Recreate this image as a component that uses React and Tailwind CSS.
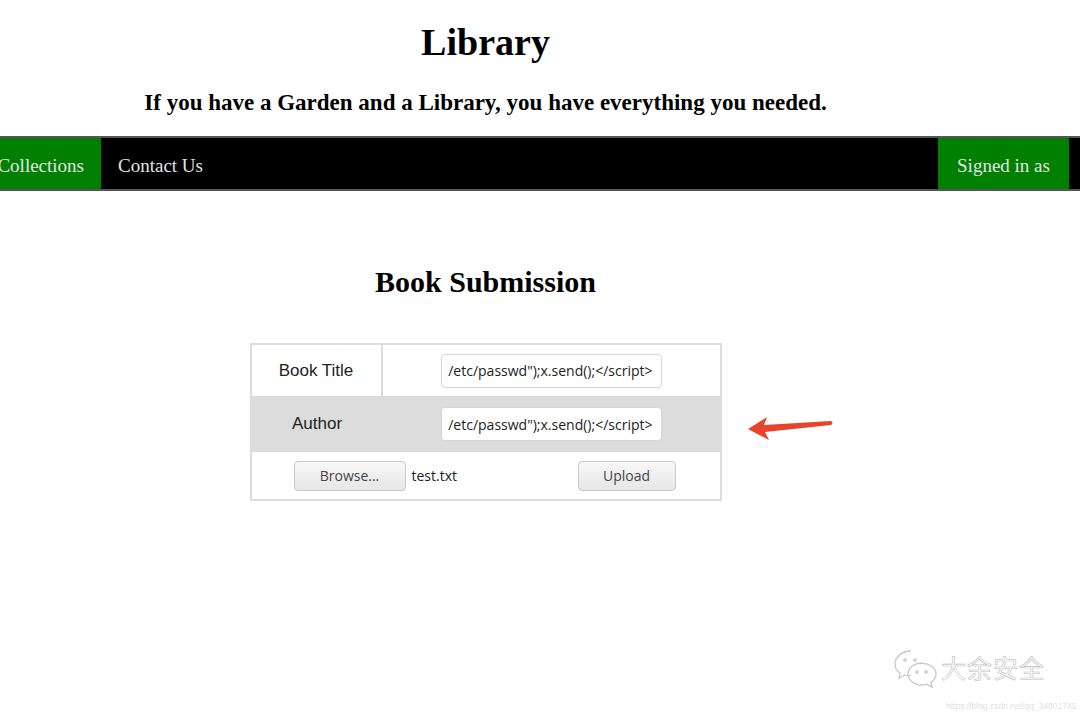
import React from 'react';

const serif = { fontFamily: '"Liberation Serif", "DejaVu Serif", serif' };
const sansInput = { fontFamily: '"Open Sans", "Noto Sans", sans-serif' };

function WeChatMark() {
  return (
    <svg width="46" height="40" viewBox="0 0 46 40" fill="none" stroke="#c8c8c8" strokeWidth="1.3">
      <path d="M18 3C9 3 2 9 2 16c0 4 2 7 5 9l-1 5 6-3c2 .6 4 .8 6 .8" />
      <circle cx="12" cy="12" r="1.2" />
      <circle cx="22" cy="12" r="1.2" />
      <path d="M29 15c-8 0-14 5-14 11s6 11 14 11c2 0 3-.2 5-.7l5 3-1-5c3-2 5-5 5-8 0-6-6-11-14-11z" />
      <circle cx="24" cy="24" r="1.2" />
      <circle cx="33" cy="24" r="1.2" />
    </svg>
  );
}

function Field() {
  return (
    <div
      className="w-[221px] h-[34px] border border-[#d6d6d6] rounded-[4px] bg-white flex items-center justify-end pr-[8px] text-[14px] text-[#222] whitespace-nowrap overflow-hidden"
      style={sansInput}
    >
      /etc/passwd");x.send();&lt;/script&gt;
    </div>
  );
}

export default function App() {
  return (
    <div className="relative w-[1080px] h-[716px] bg-white overflow-hidden">
      <div className="w-[971px] flex flex-col items-center" style={serif}>
        <h1 className="mt-[18px] text-[38px] leading-[48px] font-bold text-black">Library</h1>
        <p className="mt-[23px] text-[23px] leading-[28px] font-bold text-black">
          If you have a Garden and a Library, you have everything you needed.
        </p>
      </div>

      <nav className="mt-[19px] h-[55px] bg-black border-t-2 border-b-2 border-[#555] flex items-stretch" style={serif}>
        <div className="w-[101px] bg-[#008000] flex items-center justify-end pr-[17px] pt-[5px] text-[19px] text-[#e4e4e4] overflow-hidden whitespace-nowrap">
          Collections
        </div>
        <div className="px-[17px] pt-[5px] flex items-center text-[19px] text-[#e4e4e4]">Contact Us</div>
        <div className="flex-1" />
        <div className="w-[131px] bg-[#008000] pt-[5px] flex items-center justify-center text-[19px] text-[#e4e4e4]">
          Signed in as
        </div>
        <div className="w-[11px]" />
      </nav>

      <div className="w-[971px] flex flex-col items-center">
        <h2 className="mt-[73px] text-[30px] leading-[36px] font-bold text-black" style={serif}>
          Book Submission
        </h2>

        <div
          className="mt-[43px] w-[472px] border-2 border-[#dddddd]"
          style={{ fontFamily: '"Liberation Sans", Arial, sans-serif' }}
        >
          <div className="flex h-[51px]">
            <div className="w-[131px] border-r-2 border-[#dddddd] flex items-center justify-center text-[17px] text-[#222]">
              Book Title
            </div>
            <div className="flex-1 flex items-center pl-[58px]">
              <Field />
            </div>
          </div>
          <div className="flex h-[56px] bg-[#dcdcdc]">
            <div className="w-[131px] flex items-center justify-center text-[17px] text-[#222]">Author</div>
            <div className="flex-1 flex items-center pl-[58px]">
              <Field />
            </div>
          </div>
          <div className="flex h-[47px] items-center" style={sansInput}>
            <div className="ml-[42px] w-[112px] h-[30px] rounded-[4px] border border-[#c9c9c9] bg-gradient-to-b from-[#f8f8f8] to-[#e6e6e6] flex items-center justify-center text-[14px] text-[#444]">
              Browse...
            </div>
            <span className="ml-[6px] text-[14px] text-[#222]">test.txt</span>
            <div className="ml-auto mr-[44px] w-[98px] h-[30px] rounded-[4px] border border-[#c9c9c9] bg-gradient-to-b from-[#f8f8f8] to-[#e6e6e6] flex items-center justify-center text-[14px] text-[#444]">
              Upload
            </div>
          </div>
        </div>
      </div>

      <svg className="absolute left-[745px] top-[412px]" width="92" height="32" viewBox="0 0 92 32">
        <path d="M3 17 L22 5 L19 13 L86 9 Q89 11 86 13 L20 20 L24 28 Z" fill="#e8432c" />
      </svg>

      <div className="absolute left-[893px] top-[648px] flex items-center gap-[2px]">
        <WeChatMark />
        <span
          className="text-[25px] text-white tracking-[1px]"
          style={{ fontFamily: '"Noto Sans CJK SC", sans-serif', WebkitTextStroke: '0.6px #bdbdbd' }}
        >
          大余安全
        </span>
      </div>
      <div
        className="absolute left-[946px] top-[700px] text-[8.5px] text-[#e2e2e2]"
        style={{ fontFamily: '"Liberation Sans", Arial, sans-serif' }}
      >
        https://blog.csdn.net/qq_34801745
      </div>
    </div>
  );
}
